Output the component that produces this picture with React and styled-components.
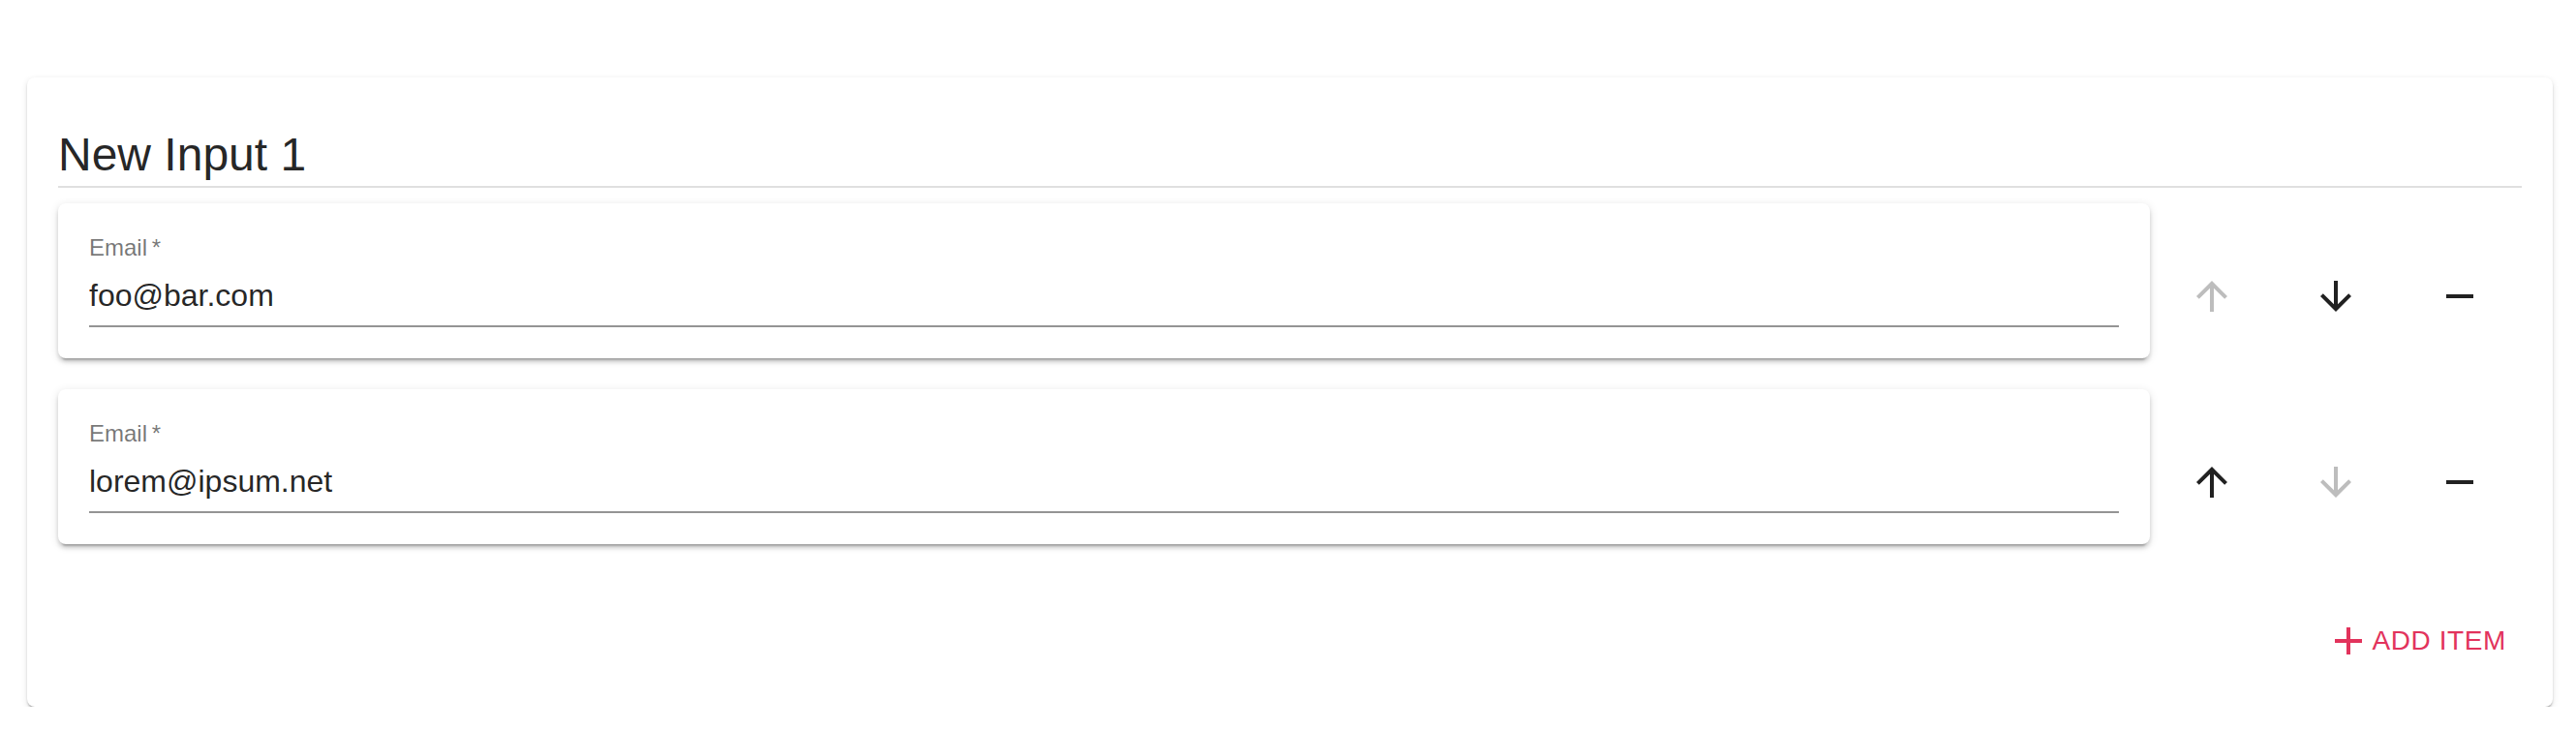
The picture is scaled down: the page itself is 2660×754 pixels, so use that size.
import styled, { createGlobalStyle } from "styled-components";

const GlobalStyle = createGlobalStyle`
    body {
        margin: 0;
        background: #ffffff;
        font-family: "Liberation Sans", Arial, Helvetica, sans-serif;
    }
`

const items = ["foo@bar.com", "lorem@ipsum.net"]

const ArrowUp = () => (
    <svg viewBox="0 0 24 24" width="48" height="48" fill="currentColor">
        <path d="M4 12l1.41 1.41L11 7.83V20h2V7.83l5.58 5.59L20 12l-8-8-8 8z" />
    </svg>
)

const ArrowDown = () => (
    <svg viewBox="0 0 24 24" width="48" height="48" fill="currentColor">
        <path d="M20 12l-1.41-1.41L13 16.17V4h-2v12.17l-5.58-5.59L4 12l8 8 8-8z" />
    </svg>
)

const Minus = () => (
    <svg viewBox="0 0 24 24" width="48" height="48" fill="currentColor">
        <path d="M19 13H5v-2h14v2z" />
    </svg>
)

const Plus = () => (
    <svg viewBox="0 0 24 24" width="48" height="48" fill="currentColor">
        <path d="M19 13h-6v6h-2v-6H5v-2h6V5h2v6h6v2z" />
    </svg>
)

const App = () => {
    return (
        <Page>
            <GlobalStyle />
            <Card>
                <TitleBox>
                    <Title>New Input 1</Title>
                    <Divider />
                </TitleBox>
                {items.map((value, i) => (
                    <ItemRow key={value}>
                        <ItemMain>
                            <FieldPaper>
                                <Label>Email&thinsp;*</Label>
                                <Input type="email" defaultValue={value} readOnly />
                            </FieldPaper>
                        </ItemMain>
                        <Actions>
                            <IconBtn disabled={i === 0} aria-label="Move up"><ArrowUp /></IconBtn>
                            <IconBtn disabled={i === items.length - 1} aria-label="Move down"><ArrowDown /></IconBtn>
                            <IconBtn aria-label="Remove"><Minus /></IconBtn>
                        </Actions>
                    </ItemRow>
                ))}
                <Footer>
                    <AddButton>
                        <Plus />
                        <span>Add Item</span>
                    </AddButton>
                </Footer>
            </Card>
        </Page>
    )
}

const Page = styled.div`
    padding: 80px 24px 0 28px;
`

const Card = styled.div`
    background: #ffffff;
    border-radius: 8px;
    padding: 32px;
    box-shadow: 0 4px 2px -2px rgba(0, 0, 0, 0.2), 0 2px 2px 0 rgba(0, 0, 0, 0.14), 0 2px 6px 0 rgba(0, 0, 0, 0.12);
`

const TitleBox = styled.div`
    margin: 16px 0;
`

const Title = styled.h5`
    margin: 0;
    font-size: 48px;
    font-weight: 400;
    line-height: 64px;
    color: rgba(0, 0, 0, 0.87);
`

const Divider = styled.hr`
    margin: 0;
    border: none;
    height: 2px;
    background: rgba(0, 0, 0, 0.12);
`

const ItemRow = styled.div`
    display: flex;
    align-items: center;
`

const ItemMain = styled.div`
    flex: 1;
    padding-bottom: 32px;
`

const FieldPaper = styled.div`
    display: flex;
    flex-direction: column;
    background: #ffffff;
    border-radius: 8px;
    padding: 32px;
    box-shadow: 0 6px 2px -4px rgba(0, 0, 0, 0.2), 0 4px 4px 0 rgba(0, 0, 0, 0.14), 0 2px 10px 0 rgba(0, 0, 0, 0.12);
`

const Label = styled.label`
    font-size: 24px;
    line-height: 24px;
    padding-top: 2px;
    margin-bottom: 6px;
    color: rgba(0, 0, 0, 0.54);
`

const Input = styled.input`
    display: block;
    width: 100%;
    box-sizing: border-box;
    height: 64px;
    padding: 8px 0 8px;
    margin: 0;
    border: none;
    border-bottom: 2px solid rgba(0, 0, 0, 0.42);
    outline: none;
    background: transparent;
    font-family: "Liberation Sans", Arial, Helvetica, sans-serif;
    font-size: 32px;
    line-height: 46px;
    color: rgba(0, 0, 0, 0.87);
`

const Actions = styled.div`
    display: flex;
`

const IconBtn = styled.button`
    display: flex;
    align-items: center;
    justify-content: center;
    width: 128px;
    height: 96px;
    padding: 0;
    border: none;
    background: none;
    color: ${p => (p.disabled ? "rgba(0, 0, 0, 0.26)" : "rgba(0, 0, 0, 0.87)")};
    cursor: ${p => (p.disabled ? "default" : "pointer")};
`

const Footer = styled.div`
    display: flex;
    justify-content: flex-end;
    margin-top: 32px;
`

const AddButton = styled.button`
    display: flex;
    align-items: center;
    height: 72px;
    padding: 0 16px 0 8px;
    border: none;
    background: none;
    border-radius: 8px;
    color: #e2335c;
    font-family: "Liberation Sans", Arial, Helvetica, sans-serif;
    font-size: 28px;
    font-weight: 400;
    text-transform: uppercase;
    letter-spacing: 0.6px;
    cursor: pointer;
`

export default App
